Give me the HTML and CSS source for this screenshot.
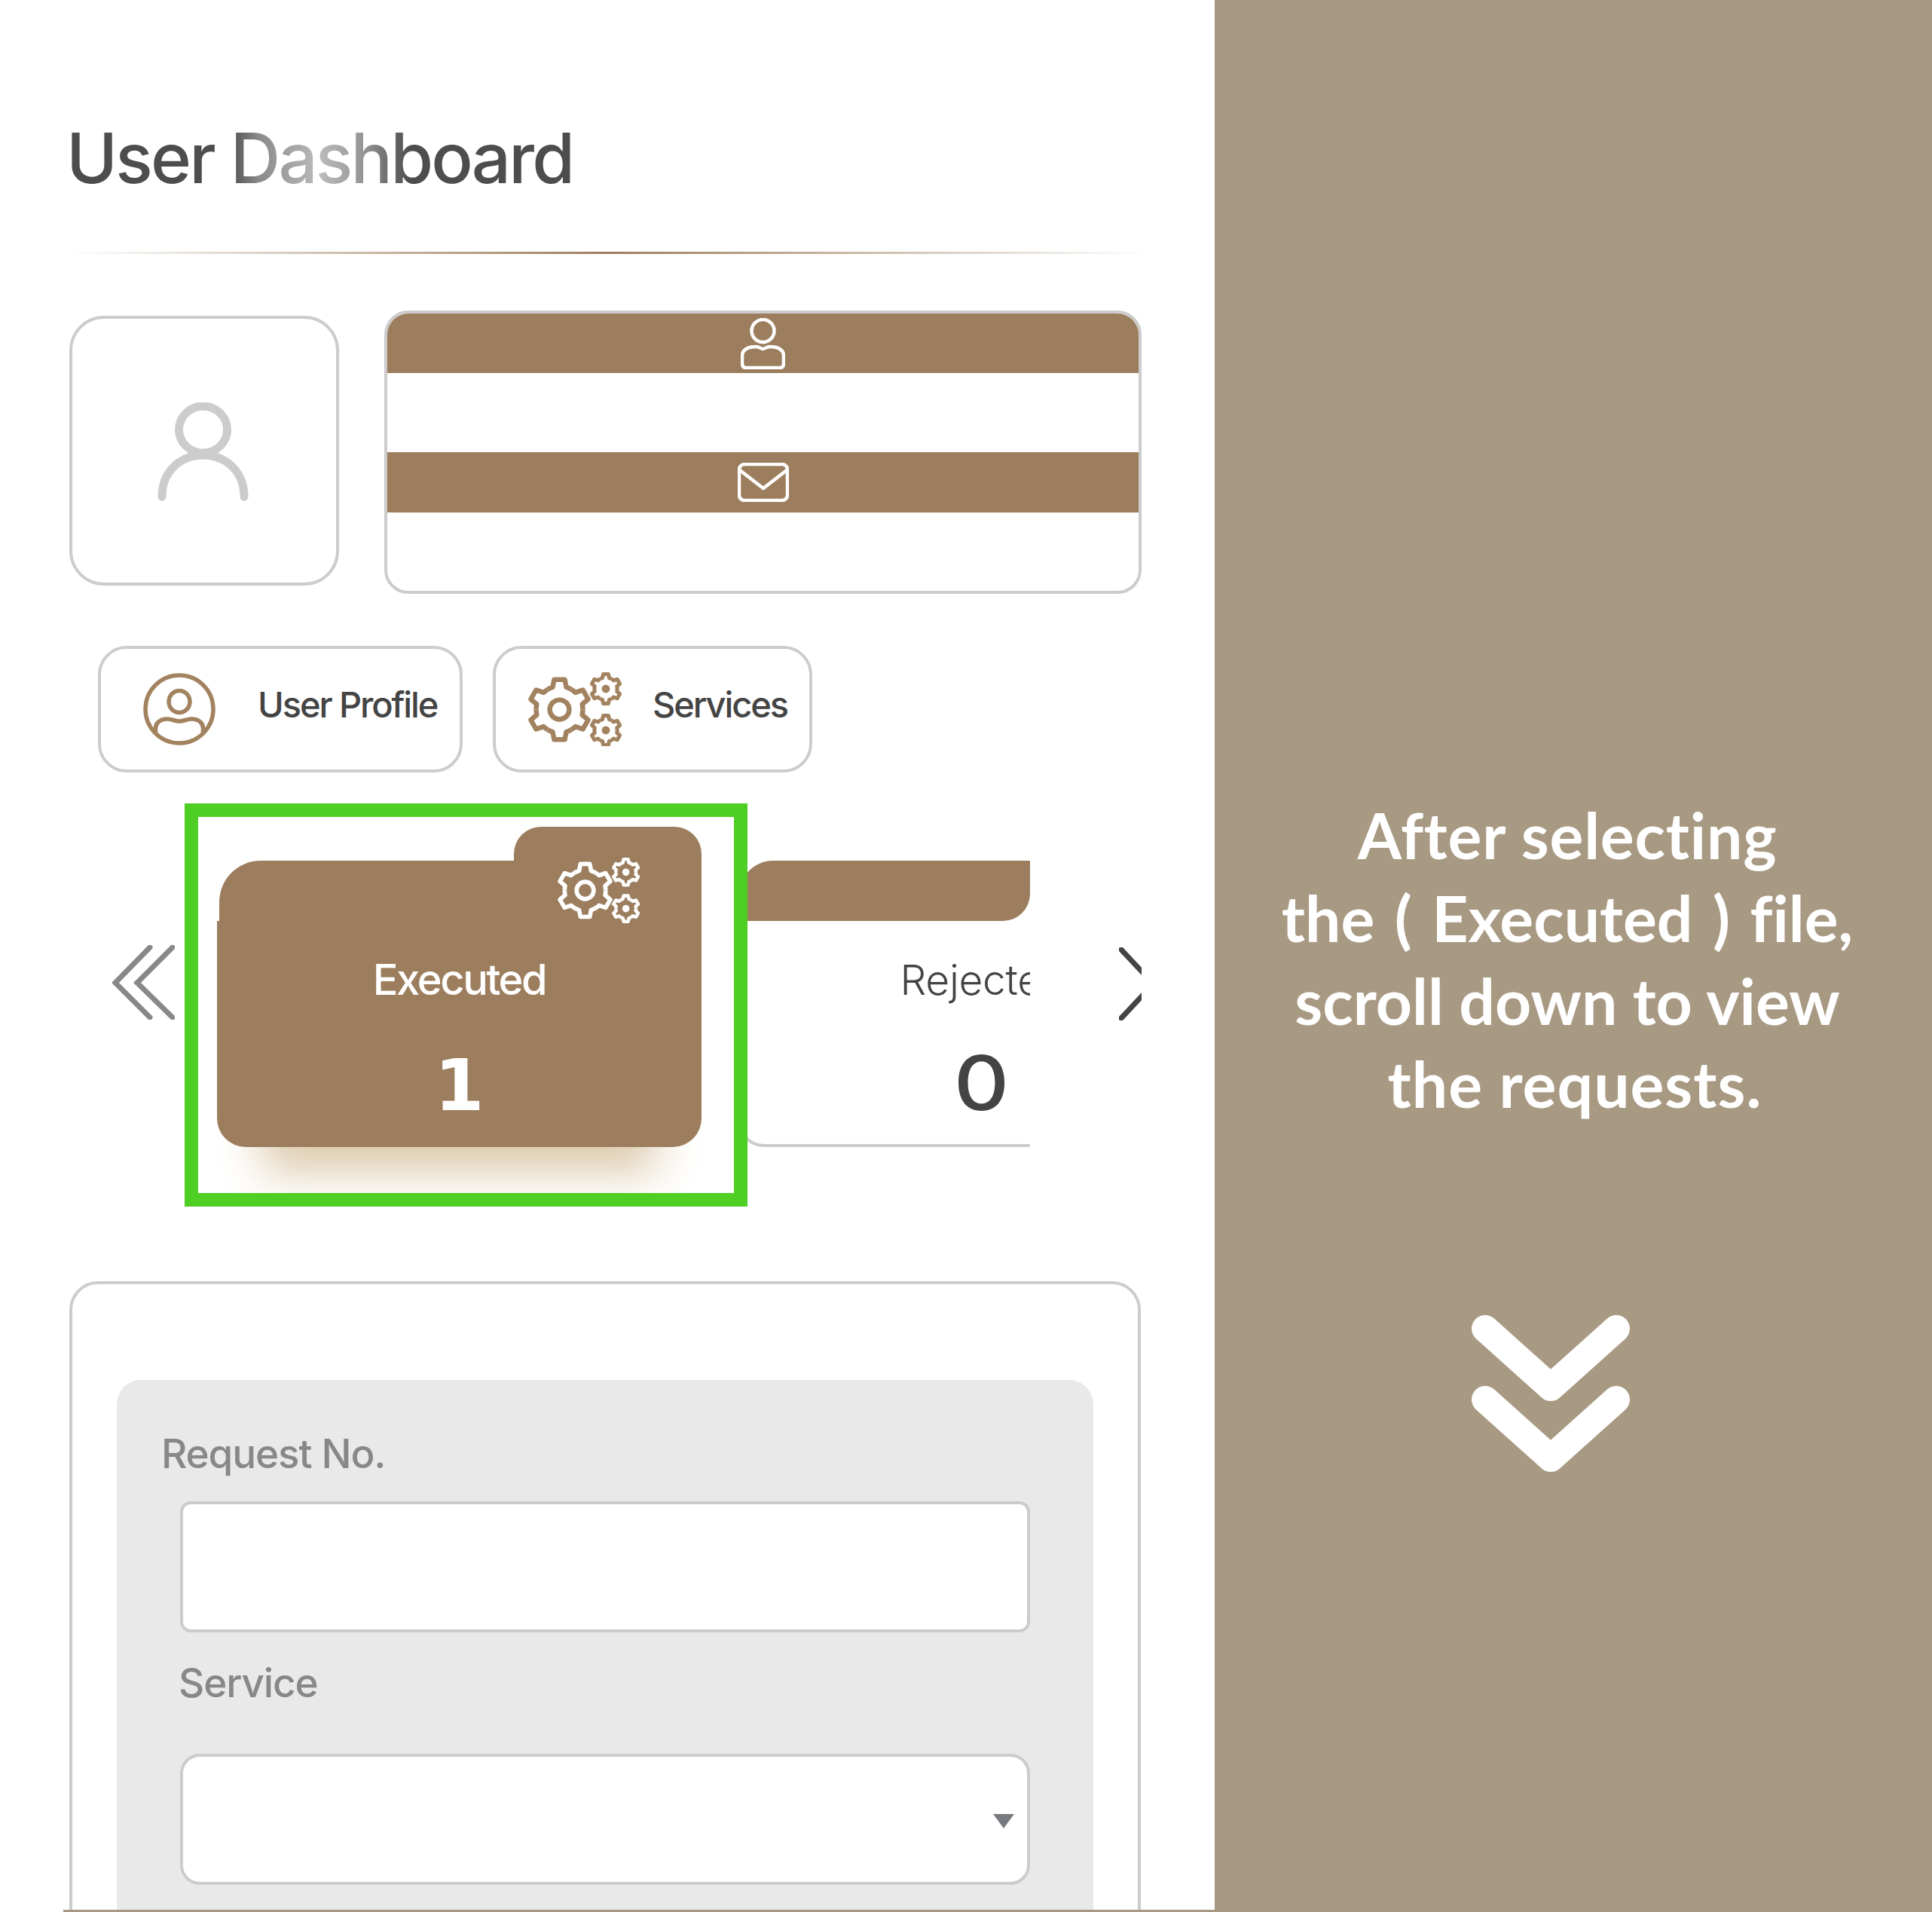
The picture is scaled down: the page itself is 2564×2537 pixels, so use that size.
FILE: index.html
```html
<!DOCTYPE html>
<html lang="en">
<head>
<meta charset="utf-8">
<title>User Dashboard</title>
<link rel="stylesheet" href="styles.css">
</head>
<body>
<svg class="defs" aria-hidden="true">
  <defs>
    <path id="tooth" d="M-18 -31.2A36 36 0 0 1 -10.5 -34.4L-8.2 -46.3H8.2L10.5 -34.4A36 36 0 0 1 18 -31.2"/>
    <g id="cog">
      <use href="#tooth"/>
      <use href="#tooth" transform="rotate(60)"/>
      <use href="#tooth" transform="rotate(120)"/>
      <use href="#tooth" transform="rotate(180)"/>
      <use href="#tooth" transform="rotate(240)"/>
      <use href="#tooth" transform="rotate(300)"/>
    </g>
    <symbol id="gears" viewBox="0 0 125 98">
      <g fill="none" stroke="currentColor" stroke-linejoin="round">
        <g transform="translate(41.5 49.5) scale(.86)" stroke-width="7.500">
          <use href="#cog"/>
          <circle r="15"/>
        </g>
        <g transform="translate(103 22) scale(.42)" stroke-width="12">
          <use href="#cog"/>
          <circle r="13" fill="currentColor" stroke="none"/>
        </g>
        <g transform="translate(103 77) scale(.42)" stroke-width="12">
          <use href="#cog"/>
          <circle r="13" fill="currentColor" stroke="none"/>
        </g>
      </g>
    </symbol>
  </defs>
</svg>

<main class="dash">
  <h1 class="title">User Dashboard</h1>
  <div class="divider"></div>

  <section class="top-row">
    <div class="avatar">
      <svg class="avatar-icon" viewBox="0 0 121 131" fill="none" stroke="#ccc" stroke-width="11" stroke-linecap="round">
        <ellipse cx="60.500" cy="36" rx="32" ry="31"/>
        <path d="M6 125C6 92 30 70 60.500 70C91 70 115 92 115 125"/>
      </svg>
    </div>
    <div class="info">
      <div class="info-bar info-bar-first">
        <svg class="info-person" viewBox="0 0 59 68" fill="none" stroke="#fff" stroke-width="4.500">
          <circle cx="29.500" cy="17" r="15"/>
          <path d="M2 60V50C2 42 10 38 20 38C25 38 27 41 29.500 41C32 41 34 38 39 38C49 38 57 42 57 50V60C57 64 55 66 52 66H7C4 66 2 64 2 60Z"/>
        </svg>
      </div>
      <div class="info-gap"></div>
      <div class="info-bar">
        <svg class="info-mail" viewBox="0 0 68 52" fill="none" stroke="#fff" stroke-width="4.500" stroke-linejoin="round">
          <rect x="2" y="2" width="64" height="48" rx="7"/>
          <path d="M3 10L34 34L65 10"/>
        </svg>
      </div>
    </div>
  </section>

  <nav class="nav-row">
    <a class="nav-btn nav-profile">
      <svg class="nav-user" viewBox="0 0 96 96" fill="none" stroke="#a2825f" stroke-width="5.500">
        <circle cx="48" cy="48" r="45"/>
        <ellipse cx="48" cy="38" rx="14" ry="14.500"/>
        <path d="M17 79C14 67 22 61 32 61C38 61 42 64 48 64C54 64 58 61 64 61C74 61 82 67 79 79"/>
      </svg>
      <span class="nav-text">User Profile</span>
    </a>
    <a class="nav-btn nav-services">
      <svg class="nav-gears"><use href="#gears"/></svg>
      <span class="nav-text">Services</span>
    </a>
  </nav>

  <section class="carousel">
    <svg class="arrow-left" viewBox="0 0 83 99" fill="none" stroke="#888" stroke-width="7" stroke-linecap="round" stroke-linejoin="miter">
      <path d="M50 3L4 50L50 96"/>
      <path d="M80 3L33 50L80 96"/>
    </svg>
    <div class="track">
      <article class="card card-active">
        <div class="folder"></div>
        <div class="tab"></div>
        <svg class="card-gears"><use href="#gears"/></svg>
        <div class="card-body">
          <div class="card-label">Executed</div>
          <div class="card-num">1</div>
        </div>
      </article>
      <article class="card card-plain">
        <div class="folder"></div>
        <div class="card-body">
          <div class="card-label">Rejected</div>
          <div class="card-num">0</div>
        </div>
      </article>
    </div>
    <svg class="arrow-right" viewBox="0 0 30 97" fill="none" stroke="#444" stroke-width="7" stroke-linecap="round">
      <path d="M3 3L44 47"/>
      <path d="M3 94L44 50"/>
    </svg>
    <div class="highlight"></div>
  </section>

  <section class="form-card">
    <div class="form-panel">
      <label class="label label-first" for="req">Request No.</label>
      <input class="field field-input" id="req" type="text">
      <label class="label label-second" for="svc">Service</label>
      <div class="select-wrap">
        <select class="field field-select" id="svc"></select>
        <svg class="caret" viewBox="0 0 28 19"><path d="M0 0H28L14 19Z" fill="#777b80"/></svg>
      </div>
    </div>
  </section>
</main>

<aside class="note">
  <p class="note-text">
    <span class="note-line note-line-first">After selecting</span>
    <span class="note-line note-line-wide">the ( Executed ) file,</span>
    <span class="note-line">scroll down to view</span>
    <span class="note-line note-line-last">the requests.</span>
  </p>
  <svg class="note-chevrons" viewBox="0 0 210 212" fill="none" stroke="#fff" stroke-width="36" stroke-linecap="round" stroke-linejoin="round">
    <path d="M18 18L105 96L192 18"/>
    <path d="M18 112L105 190L192 112"/>
  </svg>
</aside>
</body>
</html>
```
FILE: styles.css
```css
* { box-sizing: border-box; }
html, body { margin: 0; padding: 0; }
body {
  display: flex;
  width: 2564px;
  height: 2537px;
  overflow: hidden;
  background: #fff;
  font-family: Inter, "Liberation Sans", sans-serif;
  color: #444;
}
.defs { position: absolute; width: 0; height: 0; }

.dash {
  position: relative;
  flex: 0 0 1612px;
  height: 2537px;
  overflow: hidden;
  padding: 160px 0 0 92px;
}
.dash::after {
  content: "";
  position: absolute;
  left: 84px;
  right: 0;
  bottom: 0;
  height: 3px;
  background: #a89983;
}

.title {
  display: inline-block;
  margin: 0 0 0 -4px;
  font-size: 92px;
  line-height: 100px;
  font-weight: 500;
  letter-spacing: -2.800px;
  background: linear-gradient(90deg, #4d4d4d 0, #4d4d4d 32%, #8a8a8a 38%, #bbb 50%, #999 58%, #4d4d4d 68%, #4d4d4d 100%);
  -webkit-background-clip: text;
  background-clip: text;
  color: transparent;
}
.divider {
  width: 1430px;
  height: 3px;
  margin: 74px 0 0 1px;
  background: linear-gradient(90deg, rgba(156,126,94,0), #9c7e5e 50%, rgba(156,126,94,0));
}

.top-row {
  display: flex;
  align-items: center;
  gap: 60px;
  margin-top: 75px;
}
.avatar {
  display: flex;
  align-items: center;
  justify-content: center;
  width: 358px;
  height: 358px;
  margin-bottom: 4px;
  border: 4px solid #ccc;
  border-radius: 46px;
}
.avatar-icon { width: 121px; height: 131px; margin: 2px 0 0 -4px; }
.info {
  width: 1005px;
  height: 376px;
  border: 4px solid #ccc;
  border-radius: 32px;
  overflow: hidden;
}
.info-bar {
  display: flex;
  align-items: center;
  justify-content: center;
  height: 80px;
  background: #9c7e5e;
}
.info-bar-first { height: 79px; }
.info-gap { height: 105px; }
.info-person { width: 59px; height: 68px; }
.info-mail { width: 68px; height: 52px; }

.nav-row {
  display: flex;
  gap: 40px;
  margin: 69px 0 0 38px;
}
.nav-btn {
  display: flex;
  align-items: center;
  height: 168px;
  border: 4px solid #ccc;
  border-radius: 38px;
  font-size: 47px;
  font-weight: 500;
  letter-spacing: -2.100px;
  color: #444;
}
.nav-text { margin-top: -14px; }
.nav-profile { width: 484px; padding-left: 56px; gap: 56px; }
.nav-services { width: 424px; padding-left: 43px; gap: 40px; }
.nav-user { width: 96px; height: 96px; flex: none; }
.nav-gears { width: 125px; height: 98px; flex: none; color: #a2825f; }

.carousel {
  position: relative;
  display: flex;
  align-items: flex-start;
  margin-top: 72px;
  padding-left: 57px;
}
.arrow-left { flex: none; width: 83px; height: 99px; margin: 157px 56px 0 0; }
.track {
  display: flex;
  gap: 50px;
  flex: none;
  width: 1079px;
  height: 498px;
  overflow: hidden;
}
.arrow-right { flex: none; width: 30px; height: 97px; margin: 160px 0 0 118px; }
.highlight {
  position: absolute;
  left: 153px;
  top: -31px;
  width: 747px;
  height: 535px;
  border: 18px solid #4fce23;
  pointer-events: none;
}

.card {
  position: relative;
  flex: none;
  width: 643px;
  height: 425px;
  padding-top: 45px;
}
.folder {
  height: 80px;
  margin-left: 3px;
  background: #9c7e5e;
  border-radius: 55px 0 0 0;
}
.tab {
  position: absolute;
  top: 0;
  right: 0;
  width: 249px;
  height: 120px;
  background: #9c7e5e;
  border-radius: 36px 36px 0 0;
}
.card-gears {
  position: absolute;
  left: 452px;
  top: 40px;
  width: 110px;
  height: 88px;
  color: #fff;
}
.card-body {
  height: 300px;
  padding-top: 48px;
  text-align: center;
}
.card-label {
  font-size: 56px;
  line-height: 60px;
  letter-spacing: -2.400px;
}
.card-num {
  margin-top: 60px;
  line-height: 100px;
}
.card-active .card-body {
  background: #9c7e5e;
  border-radius: 0 0 38px 38px;
  box-shadow: 0 93px 60px -60px #dcc9aa;
  color: #fff;
}
.card-active .card-label { font-weight: 500; }
.card-active .card-num {
  font-family: "DejaVu Sans", sans-serif;
  font-size: 95px;
  font-weight: 700;
}
.card-plain .folder {
  width: 386px;
  margin-left: 0;
  border-radius: 45px 0 36px 0;
}
.card-plain .card-body {
  border-left: 4px solid #ccc;
  border-bottom: 4px solid #ccc;
  border-radius: 0 0 0 32px;
  background: #fff;
  color: #444;
}
.card-plain .card-label { font-weight: 300; letter-spacing: -.300px; font-size: 55px; }
.card-plain .card-num {
  margin-top: 57px;
  margin-left: -4px;
  font-size: 100px;
  font-weight: 500;
  transform: scaleX(1.14);
}

.form-card {
  width: 1422px;
  height: 1000px;
  margin-top: 105px;
  padding: 127px 0 0 59px;
  border: 4px solid #ccc;
  border-radius: 38px;
}
.form-panel {
  width: 1296px;
  height: 900px;
  padding: 68px 0 0 54px;
  background: #e9e9e9;
  border-radius: 32px;
}
.label {
  display: block;
  font-size: 53px;
  font-weight: 500;
  line-height: 60px;
  letter-spacing: -1.100px;
  color: #888;
}
.label-first { margin-left: 5px; }
.label-second { margin: 37px 0 0 28px; }
.field {
  display: block;
  width: 1128px;
  height: 174px;
  margin-left: 30px;
  background: #fff;
  border: 4px solid #ccc;
  appearance: none;
  -webkit-appearance: none;
  outline: none;
}
.field-input { margin-top: 33px; border-radius: 14px; }
.field-select { margin-top: 0; border-radius: 26px; }
.select-wrap { position: relative; margin-top: 64px; }
.caret {
  position: absolute;
  left: 1109px;
  top: 80px;
  width: 28px;
  height: 19px;
}

.note {
  flex: 1;
  display: flex;
  flex-direction: column;
  height: 2537px;
  padding-top: 1053px;
  background: #a89983;
}
.note-text {
  margin: 0;
  padding-right: 16px;
  font-family: Lato, "Noto Sans", sans-serif;
  font-size: 84px;
  line-height: 110px;
  font-weight: 700;
  font-variant-ligatures: none;
  text-align: center;
  color: #fff;
}
.note-line { display: block; }
.note-line-first { letter-spacing: .8px; }
.note-line-wide { word-spacing: 6px; }
.note-line-last { padding-left: 20px; letter-spacing: 1px; }
.note-chevrons {
  width: 210px;
  height: 212px;
  margin: 252px 0 0 341px;
}
```
